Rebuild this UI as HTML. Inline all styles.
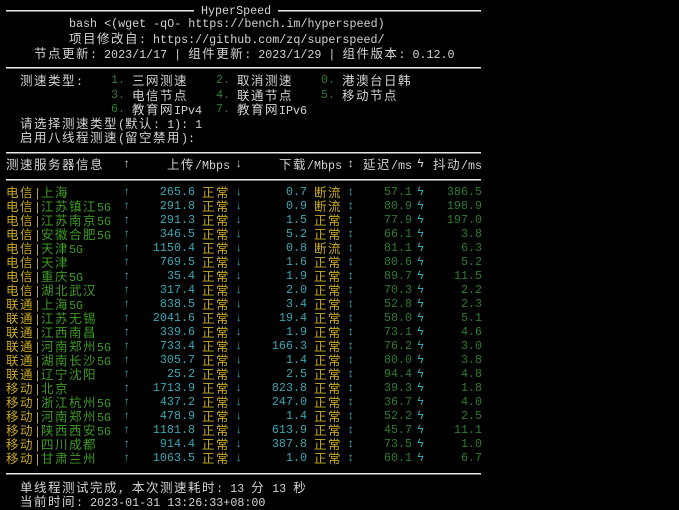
<!DOCTYPE html>
<html><head><meta charset="utf-8"><style>
body{margin:0;width:679px;height:509px;background:#000;overflow:hidden;position:relative;font-family:"Liberation Mono","DejaVu Sans Mono","Noto Sans CJK SC",monospace;font-size:11.7px;color:#d4d4d4}
.ln{position:absolute;left:0;white-space:pre;line-height:14px}
i{font-style:normal;font-family:"Noto Sans CJK SC","WenQuanYi Zen Hei",sans-serif;font-size:12.5px;letter-spacing:1.5px;line-height:14px}
.hr{position:absolute;left:6px;width:475px;height:1px;background:#e8e8e8;border-bottom:1px solid #777}
.dg{color:#2e7d2e}
.r{position:absolute;left:0;height:14px;line-height:14px;width:679px;white-space:pre}
.r span{position:absolute;top:0}
.r span:nth-child(1){left:6px}
.r span:nth-child(1) b{font-weight:normal;color:#c8aa1e}
.r span:nth-child(1) em{font-style:normal;color:#3f9a24}
.r span:nth-child(2){left:123px;width:7px;text-align:center;color:#3aa8b4}
.r span:nth-child(3){left:132px;width:63px;text-align:right;color:#3aa8b4}
.r span:nth-child(4){left:202px;color:#c8aa1e}
.r span:nth-child(5){left:235px;width:7px;text-align:center;color:#3aa8b4}
.r span:nth-child(6){left:244px;width:63px;text-align:right;color:#3aa8b4}
.r span:nth-child(7){left:314px;color:#c8aa1e}
.r span:nth-child(8){left:347px;width:7px;text-align:center;color:#3aa8b4}
.r span:nth-child(9){left:356px;width:56px;text-align:right;color:#2e7d2e}
.r span:nth-child(10){left:417px;width:7px;text-align:center;color:#3aa8b4}
.r span:nth-child(11){left:426px;width:56px;text-align:right;color:#2e7d2e}
</style></head><body>
<div class="hr" style="top:10px;width:188px"></div>
<div class="ln" style="left:201px;top:4px">HyperSpeed</div>
<div class="hr" style="top:10px;left:278px;width:203px"></div>
<div class="ln" style="left:69px;top:17px">bash &lt;(wget -qO- https://bench.im/hyperspeed)</div>
<div class="ln" style="left:69px;top:31px"><i>项目修改自</i>: https://github.com/zq/superspeed/</div>
<div class="ln" style="left:34px;top:46px"><i>节点更新</i>: 2023/1/17 | <i>组件更新</i>: 2023/1/29 | <i>组件版本</i>: 0.12.0</div>
<div class="hr" style="top:67px"></div>
<div class="ln" style="left:20px;top:73px"><i>测速类型</i>:</div>
<div class="ln dg" style="left:111px;top:73px">1.</div><div class="ln" style="left:132px;top:73px"><i>三网测速</i></div>
<div class="ln dg" style="left:216px;top:73px">2.</div><div class="ln" style="left:237px;top:73px"><i>取消测速</i></div>
<div class="ln dg" style="left:321px;top:73px">0.</div><div class="ln" style="left:342px;top:73px"><i>港澳台日韩</i></div>
<div class="ln dg" style="left:111px;top:88px">3.</div><div class="ln" style="left:132px;top:88px"><i>电信节点</i></div>
<div class="ln dg" style="left:216px;top:88px">4.</div><div class="ln" style="left:237px;top:88px"><i>联通节点</i></div>
<div class="ln dg" style="left:321px;top:88px">5.</div><div class="ln" style="left:342px;top:88px"><i>移动节点</i></div>
<div class="ln dg" style="left:111px;top:102px">6.</div><div class="ln" style="left:132px;top:102px"><i>教育网</i>IPv4</div>
<div class="ln dg" style="left:216px;top:102px">7.</div><div class="ln" style="left:237px;top:102px"><i>教育网</i>IPv6</div>
<div class="ln" style="left:20px;top:116px"><i>请选择测速类型</i>(<i>默认</i>: 1): 1</div>
<div class="ln" style="left:20px;top:130px"><i>启用八线程测速</i>(<i>留空禁用</i>):</div>
<div class="hr" style="top:152px"></div>
<div class="ln" style="left:6px;top:157px"><i>测速服务器信息</i></div>
<div class="ln" style="left:123px;top:157px">↑</div>
<div class="ln" style="left:167px;top:157px"><i>上传</i>/Mbps</div>
<div class="ln" style="left:235px;top:157px">↓</div>
<div class="ln" style="left:279px;top:157px"><i>下载</i>/Mbps</div>
<div class="ln" style="left:347px;top:157px">↕</div>
<div class="ln" style="left:363px;top:157px"><i>延迟</i>/ms</div>
<div class="ln" style="left:417px;top:157px">ϟ</div>
<div class="ln" style="left:433px;top:157px"><i>抖动</i>/ms</div>
<div class="hr" style="top:179px"></div>

<div class="r" style="top:185px"><span><b><i>电信</i>|</b><em><i>上海</i></em></span><span>↑</span><span>265.6</span><span><i>正常</i></span><span>↓</span><span>0.7</span><span><i>断流</i></span><span>↕</span><span>57.1</span><span>ϟ</span><span>386.5</span></div>
<div class="r" style="top:199px"><span><b><i>电信</i>|</b><em><i>江苏镇江</i>5G</em></span><span>↑</span><span>291.8</span><span><i>正常</i></span><span>↓</span><span>0.9</span><span><i>断流</i></span><span>↕</span><span>80.9</span><span>ϟ</span><span>198.9</span></div>
<div class="r" style="top:213px"><span><b><i>电信</i>|</b><em><i>江苏南京</i>5G</em></span><span>↑</span><span>291.3</span><span><i>正常</i></span><span>↓</span><span>1.5</span><span><i>正常</i></span><span>↕</span><span>77.9</span><span>ϟ</span><span>197.0</span></div>
<div class="r" style="top:227px"><span><b><i>电信</i>|</b><em><i>安徽合肥</i>5G</em></span><span>↑</span><span>346.5</span><span><i>正常</i></span><span>↓</span><span>5.2</span><span><i>正常</i></span><span>↕</span><span>66.1</span><span>ϟ</span><span>3.8</span></div>
<div class="r" style="top:241px"><span><b><i>电信</i>|</b><em><i>天津</i>5G</em></span><span>↑</span><span>1150.4</span><span><i>正常</i></span><span>↓</span><span>0.8</span><span><i>断流</i></span><span>↕</span><span>81.1</span><span>ϟ</span><span>6.3</span></div>
<div class="r" style="top:255px"><span><b><i>电信</i>|</b><em><i>天津</i></em></span><span>↑</span><span>769.5</span><span><i>正常</i></span><span>↓</span><span>1.6</span><span><i>正常</i></span><span>↕</span><span>80.6</span><span>ϟ</span><span>5.2</span></div>
<div class="r" style="top:269px"><span><b><i>电信</i>|</b><em><i>重庆</i>5G</em></span><span>↑</span><span>35.4</span><span><i>正常</i></span><span>↓</span><span>1.9</span><span><i>正常</i></span><span>↕</span><span>89.7</span><span>ϟ</span><span>11.5</span></div>
<div class="r" style="top:283px"><span><b><i>电信</i>|</b><em><i>湖北武汉</i></em></span><span>↑</span><span>317.4</span><span><i>正常</i></span><span>↓</span><span>2.0</span><span><i>正常</i></span><span>↕</span><span>70.3</span><span>ϟ</span><span>2.2</span></div>
<div class="r" style="top:297px"><span><b><i>联通</i>|</b><em><i>上海</i>5G</em></span><span>↑</span><span>838.5</span><span><i>正常</i></span><span>↓</span><span>3.4</span><span><i>正常</i></span><span>↕</span><span>52.8</span><span>ϟ</span><span>2.3</span></div>
<div class="r" style="top:311px"><span><b><i>联通</i>|</b><em><i>江苏无锡</i></em></span><span>↑</span><span>2041.6</span><span><i>正常</i></span><span>↓</span><span>19.4</span><span><i>正常</i></span><span>↕</span><span>58.0</span><span>ϟ</span><span>5.1</span></div>
<div class="r" style="top:325px"><span><b><i>联通</i>|</b><em><i>江西南昌</i></em></span><span>↑</span><span>339.6</span><span><i>正常</i></span><span>↓</span><span>1.9</span><span><i>正常</i></span><span>↕</span><span>73.1</span><span>ϟ</span><span>4.6</span></div>
<div class="r" style="top:339px"><span><b><i>联通</i>|</b><em><i>河南郑州</i>5G</em></span><span>↑</span><span>733.4</span><span><i>正常</i></span><span>↓</span><span>166.3</span><span><i>正常</i></span><span>↕</span><span>76.2</span><span>ϟ</span><span>3.0</span></div>
<div class="r" style="top:353px"><span><b><i>联通</i>|</b><em><i>湖南长沙</i>5G</em></span><span>↑</span><span>305.7</span><span><i>正常</i></span><span>↓</span><span>1.4</span><span><i>正常</i></span><span>↕</span><span>80.0</span><span>ϟ</span><span>3.8</span></div>
<div class="r" style="top:367px"><span><b><i>联通</i>|</b><em><i>辽宁沈阳</i></em></span><span>↑</span><span>25.2</span><span><i>正常</i></span><span>↓</span><span>2.5</span><span><i>正常</i></span><span>↕</span><span>94.4</span><span>ϟ</span><span>4.8</span></div>
<div class="r" style="top:381px"><span><b><i>移动</i>|</b><em><i>北京</i></em></span><span>↑</span><span>1713.9</span><span><i>正常</i></span><span>↓</span><span>823.8</span><span><i>正常</i></span><span>↕</span><span>39.3</span><span>ϟ</span><span>1.8</span></div>
<div class="r" style="top:395px"><span><b><i>移动</i>|</b><em><i>浙江杭州</i>5G</em></span><span>↑</span><span>437.2</span><span><i>正常</i></span><span>↓</span><span>247.0</span><span><i>正常</i></span><span>↕</span><span>36.7</span><span>ϟ</span><span>4.0</span></div>
<div class="r" style="top:409px"><span><b><i>移动</i>|</b><em><i>河南郑州</i>5G</em></span><span>↑</span><span>478.9</span><span><i>正常</i></span><span>↓</span><span>1.4</span><span><i>正常</i></span><span>↕</span><span>52.2</span><span>ϟ</span><span>2.5</span></div>
<div class="r" style="top:423px"><span><b><i>移动</i>|</b><em><i>陕西西安</i>5G</em></span><span>↑</span><span>1181.8</span><span><i>正常</i></span><span>↓</span><span>613.9</span><span><i>正常</i></span><span>↕</span><span>45.7</span><span>ϟ</span><span>11.1</span></div>
<div class="r" style="top:437px"><span><b><i>移动</i>|</b><em><i>四川成都</i></em></span><span>↑</span><span>914.4</span><span><i>正常</i></span><span>↓</span><span>387.8</span><span><i>正常</i></span><span>↕</span><span>73.5</span><span>ϟ</span><span>1.0</span></div>
<div class="r" style="top:451px"><span><b><i>移动</i>|</b><em><i>甘肃兰州</i></em></span><span>↑</span><span>1063.5</span><span><i>正常</i></span><span>↓</span><span>1.0</span><span><i>正常</i></span><span>↕</span><span>60.1</span><span>ϟ</span><span>6.7</span></div>

<div class="hr" style="top:473px"></div>
<div class="ln" style="left:20px;top:480px"><i>单线程测试完成</i>, <i>本次测速耗时</i>: 13 <i>分</i> 13 <i>秒</i></div>
<div class="ln" style="left:20px;top:494px"><i>当前时间</i>: 2023-01-31 13:26:33+08:00</div>
</body></html>
